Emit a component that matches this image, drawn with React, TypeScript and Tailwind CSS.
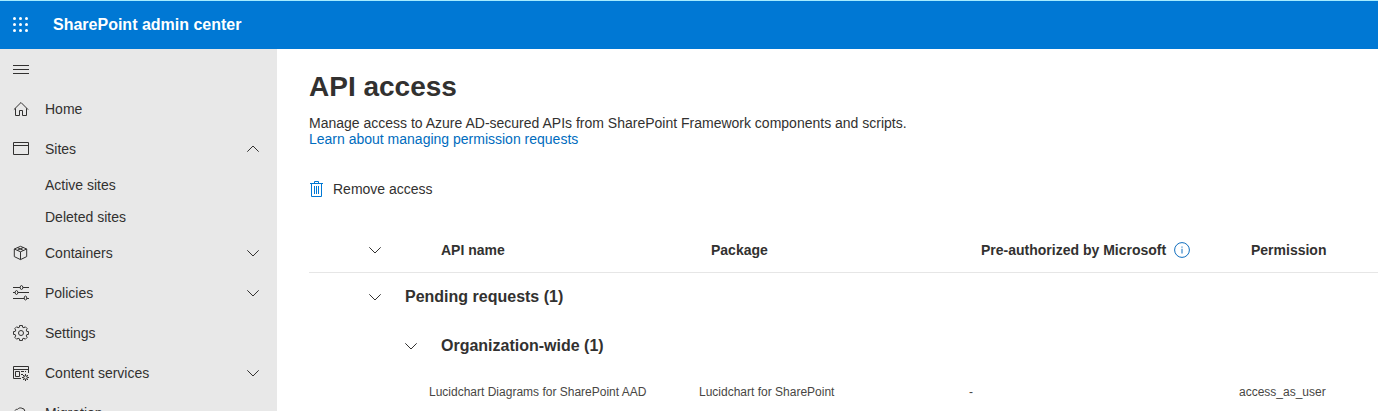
import { useState } from "react";
import type { ReactNode } from "react";

function Icon({ children, className = "" }: { children: ReactNode; className?: string }) {
  return (
    <svg
      viewBox="0 0 16 16"
      className={`size-4 shrink-0 ${className}`}
      fill="none"
      stroke="currentColor"
      strokeWidth="1"
      aria-hidden="true"
    >
      {children}
    </svg>
  );
}

function gearPath(cx: number, cy: number, outer: number, inner: number, teeth: number) {
  const step = (Math.PI * 2) / teeth;
  const points: string[] = [];
  for (let i = 0; i < teeth; i++) {
    const a = i * step - Math.PI / 2;
    const corners: [number, number][] = [
      [inner, -0.33],
      [outer, -0.25],
      [outer, 0.25],
      [inner, 0.33],
    ];
    for (const [r, t] of corners) {
      points.push(`${(cx + r * Math.cos(a + t * step)).toFixed(2)} ${(cy + r * Math.sin(a + t * step)).toFixed(2)}`);
    }
  }
  return `M${points.join("L")}Z`;
}

function Chevron({ up = false }: { up?: boolean }) {
  return <Icon>{up ? <path d="M2.3 10.7 8 5l5.7 5.7" /> : <path d="M2.3 5.3 8 11l5.7-5.7" />}</Icon>;
}

const homeIcon = (
  <Icon>
    <path d="M.9 8.600 8 1.500l7.1 7.1M2.5 7.300v7.200h4v-5h3v5h4V7.300" />
  </Icon>
);

const sitesIcon = (
  <Icon>
    <path d="M.5 1.5h15v12H.5zM.5 4.5h15" />
  </Icon>
);

const containersIcon = (
  <Icon>
    <path d="M7.5 1.3 13.7 4v7.6l-6.200 3-6.200-3V4zM1.300 4l6.200 2.8L13.700 4M7.5 6.8v7.8M4.5 2.7l6.200 2.8M4.2 5.3l6.200-2.8" />
  </Icon>
);

const policiesIcon = (
  <Icon>
    <path d="M0 2.5h7M10 2.5h6M0 7.5h2M5 7.5h11M0 13.5h11M14 13.5h2" />
    <ellipse cx="8.5" cy="2.5" rx="1.3" ry="2" />
    <ellipse cx="3.5" cy="7.5" rx="1.3" ry="2" />
    <ellipse cx="12.5" cy="13" rx="1.3" ry="2" />
  </Icon>
);

const settingsIcon = (
  <Icon>
    <path d={gearPath(8, 8, 7.6, 6, 8)} strokeLinejoin="round" />
    <circle cx="8" cy="8" r="2.5" />
  </Icon>
);

const contentIcon = (
  <Icon>
    <path d="M8 13.5H.5v-12h15V8M.5 4.5h15M2.5 6.5h4v5h-4zM8 6.5h3M12 6.5h1M8 9.5h2" />
    <circle cx="12.5" cy="12.5" r="1.8" />
    <path d="M12.5 9v1.700M12.500 14.300V16M9 12.500h1.700M14.300 12.500H16M10 10l1.200 1.200M13.800 13.800 15 15M15 10l-1.200 1.200M11.200 13.800 10 15" />
  </Icon>
);

const migrationIcon = (
  <Icon>
    <path d="M4 13.5a3.3 3.3 0 0 1-.3-6.5M2 5.5c.5-1 1.6-1.3 2.6-1.2C5.500 3 7 2.800 8.200 3a4.300 4.300 0 0 1 4 4c1.800.2 3.300 1.400 3.300 3.200s-1.500 3.300-3.300 3.300H4" />
  </Icon>
);

type NavEntry = { label: string; icon: ReactNode; expandable?: boolean; children?: string[] };

const navigation: NavEntry[] = [
  { label: "Home", icon: homeIcon },
  { label: "Sites", icon: sitesIcon, expandable: true, children: ["Active sites", "Deleted sites"] },
  { label: "Containers", icon: containersIcon, expandable: true },
  { label: "Policies", icon: policiesIcon, expandable: true },
  { label: "Settings", icon: settingsIcon },
  { label: "Content services", icon: contentIcon, expandable: true },
  { label: "Migration", icon: migrationIcon },
];

function NavItem({ entry }: { entry: NavEntry }) {
  const [open, setOpen] = useState(Boolean(entry.children));
  const row = "flex h-10 w-full items-center gap-4 pr-4 pl-[13px] text-left hover:bg-black/5";
  return (
    <li>
      {entry.expandable ? (
        <button type="button" className={row} aria-expanded={open} onClick={() => setOpen(!open)}>
          {entry.icon}
          <span className="flex-1">{entry.label}</span>
          <Chevron up={open} />
        </button>
      ) : (
        <a href="#" className={row}>
          {entry.icon}
          <span className="flex-1">{entry.label}</span>
        </a>
      )}
      {open && entry.children && (
        <ul>
          {entry.children.map((child) => (
            <li key={child}>
              <a href="#" className="flex h-8 items-center pl-[45px] hover:bg-black/5">
                {child}
              </a>
            </li>
          ))}
        </ul>
      )}
    </li>
  );
}

function ToggleButton({ label, open, onToggle }: { label: string; open: boolean; onToggle: () => void }) {
  return (
    <button
      type="button"
      aria-label={label}
      aria-expanded={open}
      onClick={onToggle}
      className="flex h-8 w-9 shrink-0 items-center justify-center"
    >
      <Chevron up={!open} />
    </button>
  );
}

const requests = [
  {
    api: "Lucidchart Diagrams for SharePoint AAD",
    pkg: "Lucidchart for SharePoint",
    preauthorized: "-",
    permission: "access_as_user",
  },
];

function RequestsTable() {
  const [all, setAll] = useState(true);
  const [pending, setPending] = useState(true);
  const [org, setOrg] = useState(true);
  const th = "pl-3 text-left font-bold whitespace-nowrap";
  return (
    <table className="mt-[23px] w-full table-fixed">
      <colgroup>
        <col className="w-[120px]" />
        <col className="w-[270px]" />
        <col className="w-[270px]" />
        <col className="w-[270px]" />
        <col />
      </colgroup>
      <thead>
        <tr className="h-11 border-b border-[#e6e6e6]">
          <td className="pl-12">
            <ToggleButton label="Toggle all groups" open={all} onToggle={() => setAll(!all)} />
          </td>
          <th scope="col" className={th}>API name</th>
          <th scope="col" className={th}>Package</th>
          <th scope="col" className={th}>
            <div className="flex items-center gap-2">
              Pre-authorized by Microsoft
              <button type="button" aria-label="About pre-authorization" className="text-[#106ebe]">
                <Icon>
                  <circle cx="8" cy="8" r="7.4" />
                  <path d="M8 6.800v4.700M8 4.500v1.200" />
                </Icon>
              </button>
            </div>
          </th>
          <th scope="col" className={th}>Permission</th>
        </tr>
      </thead>
      {all && (
        <tbody>
          <tr className="h-[49px]">
            <th colSpan={5} scope="rowgroup" className="pl-12 text-base font-bold">
              <div className="flex items-center gap-3">
                <ToggleButton label="Toggle pending requests" open={pending} onToggle={() => setPending(!pending)} />
                Pending requests (1)
              </div>
            </th>
          </tr>
          {pending && (
            <tr className="h-[49px]">
              <th colSpan={5} scope="rowgroup" className="pl-[84px] text-base font-bold">
                <div className="flex items-center gap-3">
                  <ToggleButton label="Toggle organization-wide requests" open={org} onToggle={() => setOrg(!org)} />
                  Organization-wide (1)
                </div>
              </th>
            </tr>
          )}
          {pending &&
            org &&
            requests.map((r) => (
              <tr key={r.api} className="h-11 text-xs text-[#484644]">
                <td />
                <td>{r.api}</td>
                <td>{r.pkg}</td>
                <td>{r.preauthorized}</td>
                <td>{r.permission}</td>
              </tr>
            ))}
        </tbody>
      )}
    </table>
  );
}

export default function App() {
  const dots = [1.5, 7.5, 13.5];
  return (
    <div className="flex h-screen flex-col overflow-hidden bg-white font-['Liberation_Sans',Arial,sans-serif] text-sm text-[#323130]">
      <header className="flex h-[49px] shrink-0 items-center border-t border-[#a5ecff] bg-[#0078d4] pl-[13px] text-white">
        <button type="button" aria-label="App launcher" className="mr-6">
          <svg viewBox="0 0 16 16" className="size-4" fill="currentColor" aria-hidden="true">
            {dots.map((y) => dots.map((x) => <circle key={`${x}-${y}`} cx={x} cy={y} r="1.500" />))}
          </svg>
        </button>
        <span className="text-base font-bold">SharePoint admin center</span>
      </header>
      <div className="flex min-h-0 flex-1">
        <nav aria-label="Main" className="w-[277px] shrink-0 overflow-hidden bg-[#e8e8e8]">
          <button type="button" aria-label="Collapse navigation" className="flex h-10 items-center pl-[13px]">
            <Icon>
              <path d="M0 4.500h16M0 8.500h16M0 12.500h16" />
            </Icon>
          </button>
          <ul>
            {navigation.map((entry) => (
              <NavItem key={entry.label} entry={entry} />
            ))}
          </ul>
        </nav>
        <main className="min-w-0 flex-1 overflow-hidden pt-5 pl-8">
          <h1 className="text-[28px] leading-9 font-bold">API access</h1>
          <p className="mt-[10px] leading-4">
            Manage access to Azure AD-secured APIs from SharePoint Framework components and scripts.
            <br />
            <a href="#" className="text-[#006cbe] hover:underline">
              Learn about managing permission requests
            </a>
          </p>
          <button type="button" className="mt-[26px] flex h-8 items-center gap-2">
            <Icon className="text-[#0078d4]">
              <path d="M1 2.500h13M5.500 2.500v-2h4v2M2.500 2.500v13h10v-13M5.500 5v8M7.500 5v8M9.500 5v8" />
            </Icon>
            Remove access
          </button>
          <RequestsTable />
        </main>
      </div>
    </div>
  );
}
